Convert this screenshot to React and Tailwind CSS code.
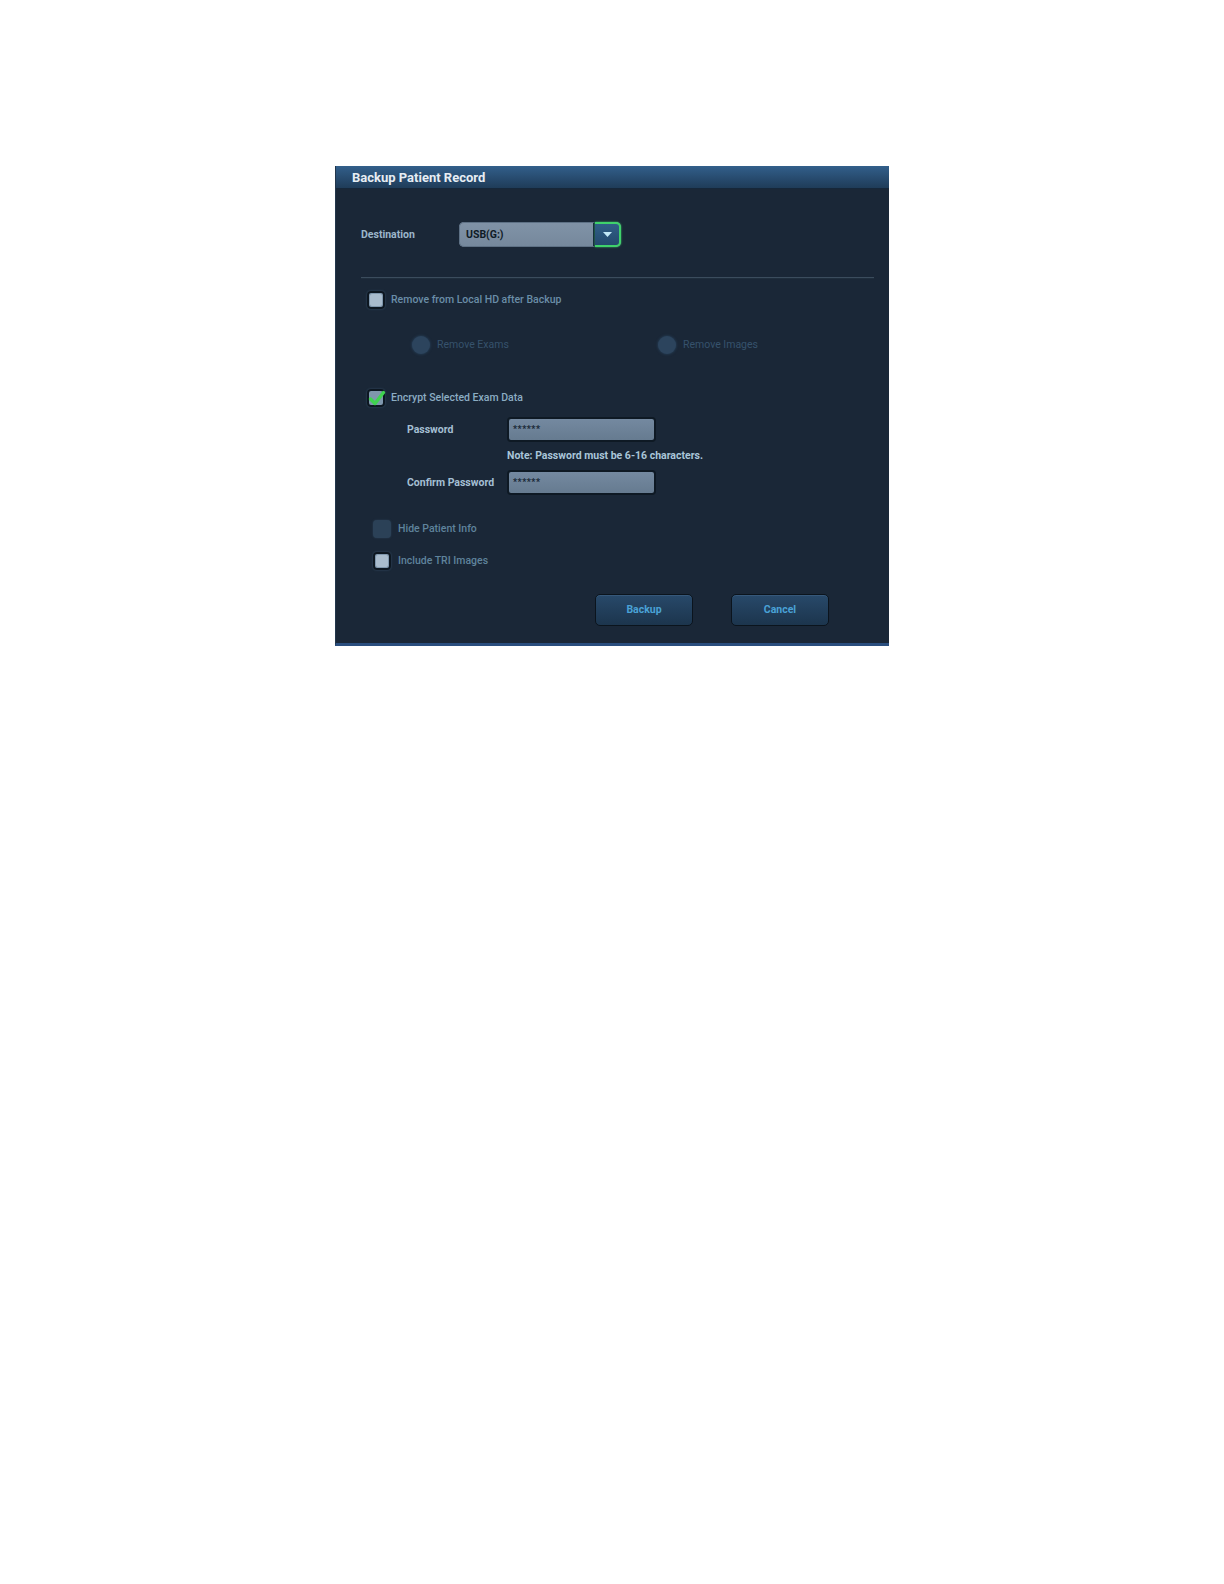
import React, { useState } from "react";

const font = { fontFamily: "Roboto, 'Liberation Sans', sans-serif" };

const Checkbox = ({ checked, disabled }) => {
  if (disabled) {
    return <span className="w-[18px] h-[18px] rounded-[4px] bg-[#2b4157] shadow-[0_0_2px_#2b4157] shrink-0" />;
  }
  return (
    <span className="relative w-[18px] h-[18px] rounded-[4px] border-2 border-[#0d1721] bg-[#7f97ad] shrink-0 flex items-center justify-center shadow-[0_0_2px_#3c5670]">
      {checked ? (
        <svg className="absolute left-[-1px] top-[-2px] overflow-visible" width="18" height="18" viewBox="0 0 18 18">
          <path d="M2.5 10 L7 14.5 L15.5 3.5" fill="none" stroke="#3fd34f" strokeWidth="3.4" strokeLinecap="round" strokeLinejoin="round" />
        </svg>
      ) : (
        <span className="w-[12px] h-[12px] rounded-[2px] bg-[#a9bccd]" />
      )}
    </span>
  );
};

const Radio = ({ label }) => (
  <div className="flex items-center gap-[7px]">
    <span className="w-[18px] h-[18px] rounded-full bg-[#2c445d] shadow-[0_0_3px_#2b4864] shrink-0" />
    <span className="text-[10.5px] text-[#36526c]">{label}</span>
  </div>
);

const PasswordInput = ({ value }) => (
  <div className="w-[149px] h-[25px] rounded-[4px] border-2 border-[#0e1924] bg-gradient-to-b from-[#7489a0] to-[#667b90] flex items-center px-[4px]">
    <span className="text-[9px] font-bold text-[#172634] leading-none tracking-[0.5px]">{value}</span>
  </div>
);

const DialogButton = ({ children }) => (
  <button className="w-[98px] h-[32px] rounded-[5px] border border-[#0b141d] bg-gradient-to-b from-[#28496a] to-[#1c354d] shadow-[inset_0_1px_0_#36587a] text-[10.5px] font-bold text-[#4aa2d6]">
    {children}
  </button>
);

export default function App() {
  const [destination] = useState("USB(G:)");
  const [password] = useState("******");

  return (
    <div className="min-h-[1584px] bg-white pt-[166px] pl-[335px]" style={font}>
      <div className="w-[554px] h-[480px] flex flex-col bg-[#1a2737] border-l border-[#22364b] border-b-[3px] border-b-[#2a4e7e]">
        {/* title bar */}
        <div className="h-[23px] shrink-0 bg-gradient-to-b from-[#325f8b] to-[#1f3c59] border-b border-[#16273a] flex items-center pl-[16px] pt-[1px]">
          <span className="text-[13px] font-bold text-[#e6edf4]">Backup Patient Record</span>
        </div>

        <div className="flex-1 flex flex-col pt-[33px] pl-[25px] pr-[15px]">
          {/* destination */}
          <div className="flex items-center h-[25px]">
            <span className="w-[98px] text-[10.5px] font-bold text-[#9cb6cb]">Destination</span>
            <div className="flex h-[25px] w-[162px] rounded-[5px] bg-gradient-to-b from-[#8193a7] to-[#75889c]">
              <div className="flex-1 flex items-center pl-[6px] border-y border-l border-[#5e7185] rounded-l-[5px] border-r-2 border-r-[#15283a]">
                <span className="text-[10.5px] font-bold text-[#0f1b26]">{destination}</span>
              </div>
              <div className="w-[26px] rounded-r-[5px] border-2 border-l-0 border-[#3fd26b] bg-gradient-to-b from-[#305f87] to-[#244a6d] flex items-center justify-center shadow-[0_0_2px_#3fd26b]">
                <svg width="9" height="5" viewBox="0 0 9 5">
                  <path d="M0 0 H9 L4.5 5 Z" fill="#c2e9f7" />
                </svg>
              </div>
            </div>
          </div>

          {/* separator */}
          <div className="mt-[30px] h-[2px] border-t border-[#3b4c5d] border-b border-b-[#1f2e3d]" />

          {/* remove from local hd */}
          <div className="mt-[12px] ml-[6px] flex items-center gap-[6px]">
            <Checkbox />
            <span className="text-[10.5px] font-medium text-[#6a8ea8]">Remove from Local HD after Backup</span>
          </div>

          <div className="mt-[27px] ml-[51px] flex items-center">
            <div className="w-[246px]">
              <Radio label="Remove Exams" />
            </div>
            <Radio label="Remove Images" />
          </div>

          {/* encrypt */}
          <div className="mt-[35px] ml-[6px] flex items-center gap-[6px]">
            <Checkbox checked />
            <span className="text-[10.5px] font-medium text-[#8cadc3]">Encrypt Selected Exam Data</span>
          </div>

          <div className="mt-[10px] ml-[46px] flex flex-col">
            <div className="flex items-center">
              <span className="w-[100px] text-[10.5px] font-bold text-[#a4bfd3]">Password</span>
              <PasswordInput value={password} />
            </div>
            <div className="pl-[100px] mt-[7px] h-[14px] flex items-center">
              <span className="text-[10.5px] font-bold text-[#a9c5d9]">Note: Password must be 6-16 characters.</span>
            </div>
            <div className="flex items-center mt-[7px]">
              <span className="w-[100px] text-[10.5px] font-bold text-[#a4bfd3]">Confirm Password</span>
              <PasswordInput value={password} />
            </div>
          </div>

          {/* other options */}
          <div className="mt-[25px] ml-[12px] flex items-center gap-[7px]">
            <Checkbox disabled />
            <span className="text-[10.5px] font-medium text-[#5f839c]">Hide Patient Info</span>
          </div>
          <div className="mt-[14px] ml-[12px] flex items-center gap-[7px]">
            <Checkbox />
            <span className="text-[10.5px] font-medium text-[#5f839c]">Include TRI Images</span>
          </div>

          {/* buttons */}
          <div className="mt-[24px] flex gap-[38px] pl-[234px]">
            <DialogButton>Backup</DialogButton>
            <DialogButton>Cancel</DialogButton>
          </div>
        </div>
      </div>
    </div>
  );
}
